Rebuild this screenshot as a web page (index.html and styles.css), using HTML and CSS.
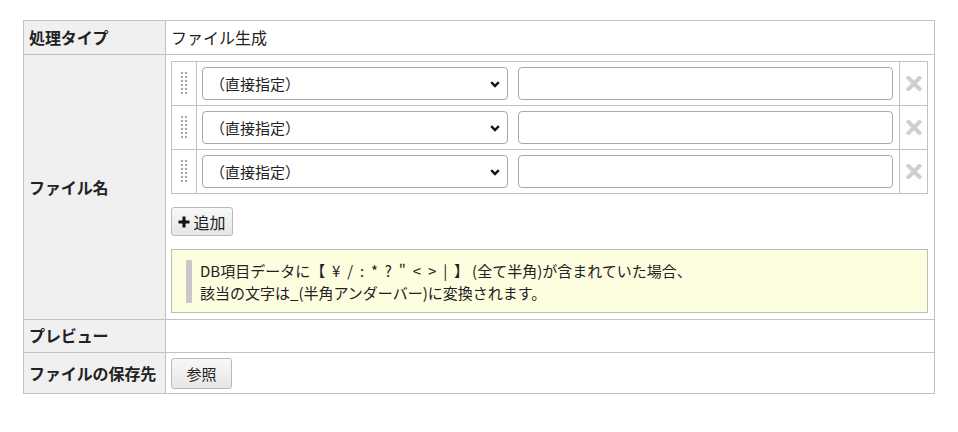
FILE: index.html
```html
<!DOCTYPE html>
<html lang="ja">
<head>
<meta charset="utf-8">
<title>ファイル生成</title>
<link rel="stylesheet" href="styles.css">
</head>
<body>
<div class="page">
  <table class="form">
    <tr class="r1">
      <th>処理タイプ</th>
      <td class="val">ファイル生成</td>
    </tr>
    <tr>
      <th>ファイル名</th>
      <td class="val name-cell">
        <table class="parts">
          <tr>
            <td class="grip"><svg width="6" height="22" viewBox="0 0 6 22"><g fill="#a8a8a8"><rect x="0" y="0" width="2" height="2"/><rect x="4" y="0" width="2" height="2"/><rect x="0" y="4" width="2" height="2"/><rect x="4" y="4" width="2" height="2"/><rect x="0" y="8" width="2" height="2"/><rect x="4" y="8" width="2" height="2"/><rect x="0" y="12" width="2" height="2"/><rect x="4" y="12" width="2" height="2"/><rect x="0" y="16" width="2" height="2"/><rect x="4" y="16" width="2" height="2"/><rect x="0" y="20" width="2" height="2"/><rect x="4" y="20" width="2" height="2"/></g></svg></td>
            <td class="fields">
              <div class="field-row">
                <div class="sel-wrap">
                  <select class="sel"><option>（直接指定）</option></select>
                  <svg class="chev" width="10" height="7" viewBox="0 0 10 7"><path d="M1.2 1.2 L5 5 L8.8 1.2" fill="none" stroke="#111" stroke-width="2.4"/></svg>
                </div>
                <input class="txt" type="text">
              </div>
            </td>
            <td class="del"><svg width="16" height="15" viewBox="0 0 16 15"><path d="M2.5 2 L13.5 13 M13.5 2 L2.5 13" stroke="#cdcfd3" stroke-width="4" stroke-linecap="square"/></svg></td>
          </tr>
          <tr>
            <td class="grip"><svg width="6" height="22" viewBox="0 0 6 22"><g fill="#a8a8a8"><rect x="0" y="0" width="2" height="2"/><rect x="4" y="0" width="2" height="2"/><rect x="0" y="4" width="2" height="2"/><rect x="4" y="4" width="2" height="2"/><rect x="0" y="8" width="2" height="2"/><rect x="4" y="8" width="2" height="2"/><rect x="0" y="12" width="2" height="2"/><rect x="4" y="12" width="2" height="2"/><rect x="0" y="16" width="2" height="2"/><rect x="4" y="16" width="2" height="2"/><rect x="0" y="20" width="2" height="2"/><rect x="4" y="20" width="2" height="2"/></g></svg></td>
            <td class="fields">
              <div class="field-row">
                <div class="sel-wrap">
                  <select class="sel"><option>（直接指定）</option></select>
                  <svg class="chev" width="10" height="7" viewBox="0 0 10 7"><path d="M1.2 1.2 L5 5 L8.8 1.2" fill="none" stroke="#111" stroke-width="2.4"/></svg>
                </div>
                <input class="txt" type="text">
              </div>
            </td>
            <td class="del"><svg width="16" height="15" viewBox="0 0 16 15"><path d="M2.5 2 L13.5 13 M13.5 2 L2.5 13" stroke="#cdcfd3" stroke-width="4" stroke-linecap="square"/></svg></td>
          </tr>
          <tr>
            <td class="grip"><svg width="6" height="22" viewBox="0 0 6 22"><g fill="#a8a8a8"><rect x="0" y="0" width="2" height="2"/><rect x="4" y="0" width="2" height="2"/><rect x="0" y="4" width="2" height="2"/><rect x="4" y="4" width="2" height="2"/><rect x="0" y="8" width="2" height="2"/><rect x="4" y="8" width="2" height="2"/><rect x="0" y="12" width="2" height="2"/><rect x="4" y="12" width="2" height="2"/><rect x="0" y="16" width="2" height="2"/><rect x="4" y="16" width="2" height="2"/><rect x="0" y="20" width="2" height="2"/><rect x="4" y="20" width="2" height="2"/></g></svg></td>
            <td class="fields">
              <div class="field-row">
                <div class="sel-wrap">
                  <select class="sel"><option>（直接指定）</option></select>
                  <svg class="chev" width="10" height="7" viewBox="0 0 10 7"><path d="M1.2 1.2 L5 5 L8.8 1.2" fill="none" stroke="#111" stroke-width="2.4"/></svg>
                </div>
                <input class="txt" type="text">
              </div>
            </td>
            <td class="del"><svg width="16" height="15" viewBox="0 0 16 15"><path d="M2.5 2 L13.5 13 M13.5 2 L2.5 13" stroke="#cdcfd3" stroke-width="4" stroke-linecap="square"/></svg></td>
          </tr>
        </table>
        <button class="btn add-btn" type="button"><svg width="12" height="12" viewBox="0 0 12 12"><path d="M6 0.5 V11.5 M0.5 6 H11.5" stroke="#111" stroke-width="3"/></svg><span>追加</span></button>
        <div class="note">
          <div class="note-body">DB項目データに<span class="syms">【 ¥ / : * ? " &lt; &gt; | 】</span>(全て半角)が含まれていた場合、<br>該当の文字は_(半角アンダーバー)に変換されます。</div>
        </div>
      </td>
    </tr>
    <tr class="r3">
      <th>プレビュー</th>
      <td class="val"></td>
    </tr>
    <tr class="r4">
      <th>ファイルの保存先</th>
      <td class="val btn-cell"><button class="btn ref-btn" type="button">参照</button></td>
    </tr>
  </table>
</div>
</body>
</html>
```

FILE: styles.css
```css
* { box-sizing: border-box; }
html, body { margin: 0; padding: 0; background: #fff; }
body {
  font-family: "Noto Sans CJK JP", "Noto Sans", sans-serif;
  font-size: 16px;
  color: #222;
}
.page { padding: 20px 23px; }

.form {
  width: 912px;
  border-collapse: collapse;
  border: 1px solid #c2c2c2;
}
.form th, .form td.val {
  border: 1px solid #c2c2c2;
  line-height: 21px;
  vertical-align: middle;
}
.form th {
  width: 142px;
  background: #f0f0f0;
  text-align: left;
  font-weight: bold;
  padding: 6px 4px 6px 5px;
  white-space: nowrap;
  letter-spacing: -0.1px;
}
.form td.val { padding: 6px 5px; }
.form .r3 th { padding: 5px 4px 6px 5px; }
.form td.name-cell { padding: 6px 6px 6px 5px; }
.form td.btn-cell { padding: 5px 5px 4px; }

.parts {
  width: 100%;
  border-collapse: collapse;
  border: 1px solid #c2c2c2;
}
.parts td {
  border-top: 1px solid #c2c2c2;
  border-bottom: 1px solid #c2c2c2;
  padding: 5px 0 5px 0;
}
.parts td.grip {
  width: 25px;
  border-right: 1px solid #c2c2c2;
  text-align: center;
  vertical-align: middle;
  line-height: 0;
  padding-top: 4px;
}
.parts td.fields { padding: 5px 6px 5px 5px; }
.parts td.del {
  width: 28px;
  border-left: 1px solid #c2c2c2;
  text-align: center;
  vertical-align: middle;
  line-height: 0;
}
.field-row { display: flex; gap: 10px; }
.sel-wrap { position: relative; width: 306px; flex: none; }
.sel {
  appearance: none;
  -webkit-appearance: none;
  width: 100%;
  height: 33px;
  border: 1px solid #a9a9a9;
  border-radius: 4px;
  background: #fff;
  font-family: inherit;
  font-size: 15px;
  color: #222;
  padding: 0 24px 0 7px;
}
.chev { position: absolute; right: 8px; top: 14px; }
.txt {
  flex: 1;
  height: 33px;
  border: 1px solid #a9a9a9;
  border-radius: 4px;
  background: #fff;
}

.btn {
  font-family: inherit;
  font-size: 16px;
  color: #222;
  border: 1px solid #b9b9b9;
  border-radius: 3px;
  background: linear-gradient(#f8f8f8, #e6e6e6);
  display: flex;
  align-items: center;
  justify-content: center;
  padding: 0;
  line-height: 20px;
}
.add-btn {
  margin-top: 13px;
  width: 62px;
  height: 29px;
  gap: 3px;
}
.ref-btn { width: 61px; height: 31px; font-size: 15px; }

.note {
  margin-top: 13px;
  background: #fdfde0;
  border: 1px solid #bdbdbd;
  padding: 10px 10px 9px 14px;
}
.note-body {
  border-left: 6px solid #c8c8c8;
  padding-left: 8px;
  font-size: 15px;
  line-height: 21.5px;
  color: #222;
}
.syms { word-spacing: 3.5px; margin-right: 3px; }
```
